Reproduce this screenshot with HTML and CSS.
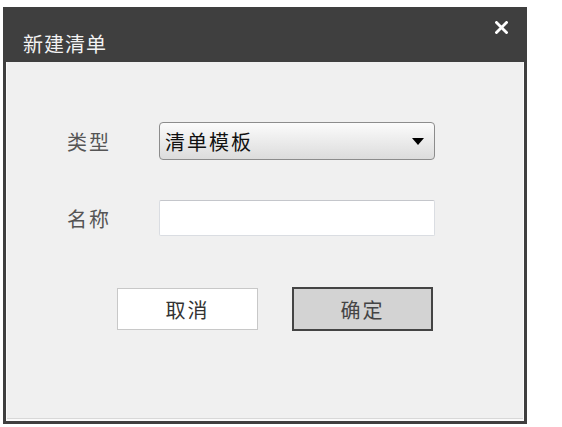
FILE: index.html
```html
<!DOCTYPE html>
<html lang="zh">
<head>
<meta charset="utf-8">
<link rel="stylesheet" href="styles.css">
</head>
<body>
<div class="dialog">
  <div class="titlebar">
    <span class="title">新建清单</span>
    <svg class="close" width="13" height="13" viewBox="0 0 13 13"><path d="M1.5 1.5L11.5 11.5M11.5 1.5L1.5 11.5" stroke="#ffffff" stroke-width="2.8" stroke-linecap="square"/></svg>
  </div>
  <div class="content">
    <div class="row">
      <span class="label">类型</span>
      <div class="select">
        <span class="select-text">清单模板</span>
        <svg class="arrow" width="12" height="7" viewBox="0 0 12 7"><path d="M0 0H12L6 7Z" fill="#000"/></svg>
      </div>
    </div>
    <div class="row row-name">
      <span class="label">名称</span>
      <div class="input"></div>
    </div>
    <div class="buttons">
      <div class="btn btn-cancel">取消</div>
      <div class="btn btn-ok">确定</div>
    </div>
  </div>
</div>
</body>
</html>
```
FILE: styles.css
```css
html, body {
  margin: 0;
  padding: 0;
  background: #ffffff;
}
body {
  font-family: "Noto Sans CJK SC", "Noto Sans", sans-serif;
}
.dialog {
  margin: 7px 0 0 3px;
  width: 524px;
  height: 417px;
  box-sizing: border-box;
  background: #3f3f3f;
  padding: 0 3px 3px 3px;
  display: flex;
  flex-direction: column;
}
.titlebar {
  height: 55px;
  flex: none;
  display: flex;
  align-items: flex-start;
  justify-content: space-between;
  color: #f2f2f2;
}
.title {
  font-size: 20px;
  line-height: 20px;
  letter-spacing: 1px;
  margin: 27px 0 0 17px;
}
.close {
  margin: 14px 16px 0 0;
}
.content {
  flex: 1;
  background: #f0f0f0;
  border-left: 1px solid #fafafa;
  border-right: 1px solid #fafafa;
  border-bottom: 2px solid #fafafa;
  box-shadow: inset 0 -1px 0 #d8d8d8;
  padding: 60px 0 0 60px;
}
.row {
  display: flex;
  align-items: center;
}
.row-name {
  margin-top: 40px;
}
.label {
  width: 92px;
  font-size: 20px;
  letter-spacing: 2px;
  color: #555555;
}
.select {
  width: 276px;
  height: 38px;
  box-sizing: border-box;
  border: 1px solid #8c8c8c;
  border-radius: 4px;
  background: linear-gradient(#fbfbfb, #dcdcdc);
  display: flex;
  align-items: center;
  justify-content: space-between;
  padding: 0 10px 0 5px;
}
.select-text {
  font-size: 20px;
  letter-spacing: 2px;
  color: #111111;
}
.input {
  width: 276px;
  height: 36px;
  box-sizing: border-box;
  background: #ffffff;
  border: 1px solid #dadde2;
  border-top-color: #c4c6cb;
  border-radius: 2px;
}
.buttons {
  display: flex;
  gap: 34px;
  margin: 51px 0 0 50px;
  align-items: center;
}
.btn {
  width: 141px;
  box-sizing: border-box;
  display: flex;
  align-items: center;
  justify-content: center;
  font-size: 20px;
  letter-spacing: 2px;
  color: #333333;
}
.btn-cancel {
  height: 42px;
  background: #ffffff;
  border: 1px solid #c8c8c8;
}
.btn-ok {
  height: 44px;
  background: #d3d3d3;
  border: 2px solid #444444;
  color: #444444;
}
```
